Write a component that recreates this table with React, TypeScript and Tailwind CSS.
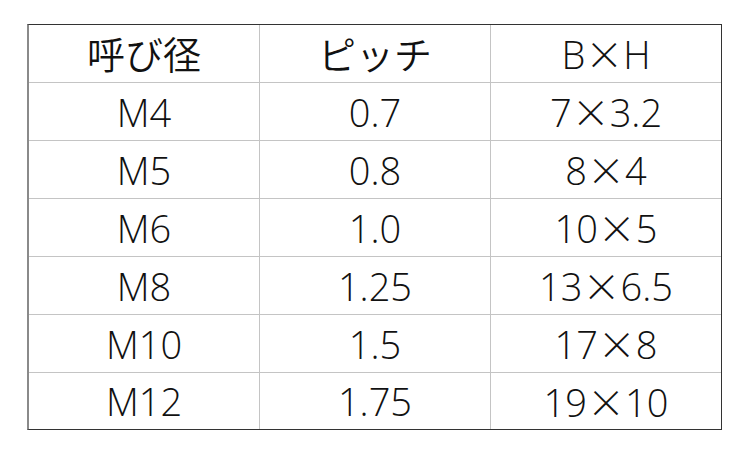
import React from "react";

const rows: [string, string, string][] = [
  ["呼び径", "ピッチ", "B×H"],
  ["M4", "0.7", "7×3.2"],
  ["M5", "0.8", "8×4"],
  ["M6", "1.0", "10×5"],
  ["M8", "1.25", "13×6.5"],
  ["M10", "1.5", "17×8"],
  ["M12", "1.75", "19×10"],
];

function Txt({ s }: { s: string }) {
  const parts = s.split("×");
  return (
    <>
      {parts.map((p, i) => (
        <React.Fragment key={i}>
          {i > 0 && (
            <span className="font-['Noto_Sans_CJK_JP',sans-serif] font-light">×</span>
          )}
          {p}
        </React.Fragment>
      ))}
    </>
  );
}

export default function App() {
  return (
    <div className="w-[750px] h-[450px] bg-white pt-[24px] pl-[27px]">
      <div className="w-[695px] border-t border-t-[#333] border-l-2 border-l-[#8a8a8a] border-r border-r-[#333] border-b border-b-[#333] grid grid-cols-[230px_1px_230px_1px_230px]">
        {rows.map((r, ri) => (
          <React.Fragment key={ri}>
            {r.map((c, ci) => (
              <React.Fragment key={ci}>
                {ci > 0 && <div className="bg-[#c4c4c4]" />}
                <div
                  className={`flex items-center justify-center text-[38px] text-[#111] font-[350] font-['Open_Sans','Noto_Sans_CJK_JP',sans-serif] leading-none ${
                    ri < rows.length - 1 ? "h-[58px] border-b border-b-[#c4c4c4]" : "h-[56px]"
                  }`}
                >
                  <span>
                    <Txt s={c} />
                  </span>
                </div>
              </React.Fragment>
            ))}
          </React.Fragment>
        ))}
      </div>
    </div>
  );
}
